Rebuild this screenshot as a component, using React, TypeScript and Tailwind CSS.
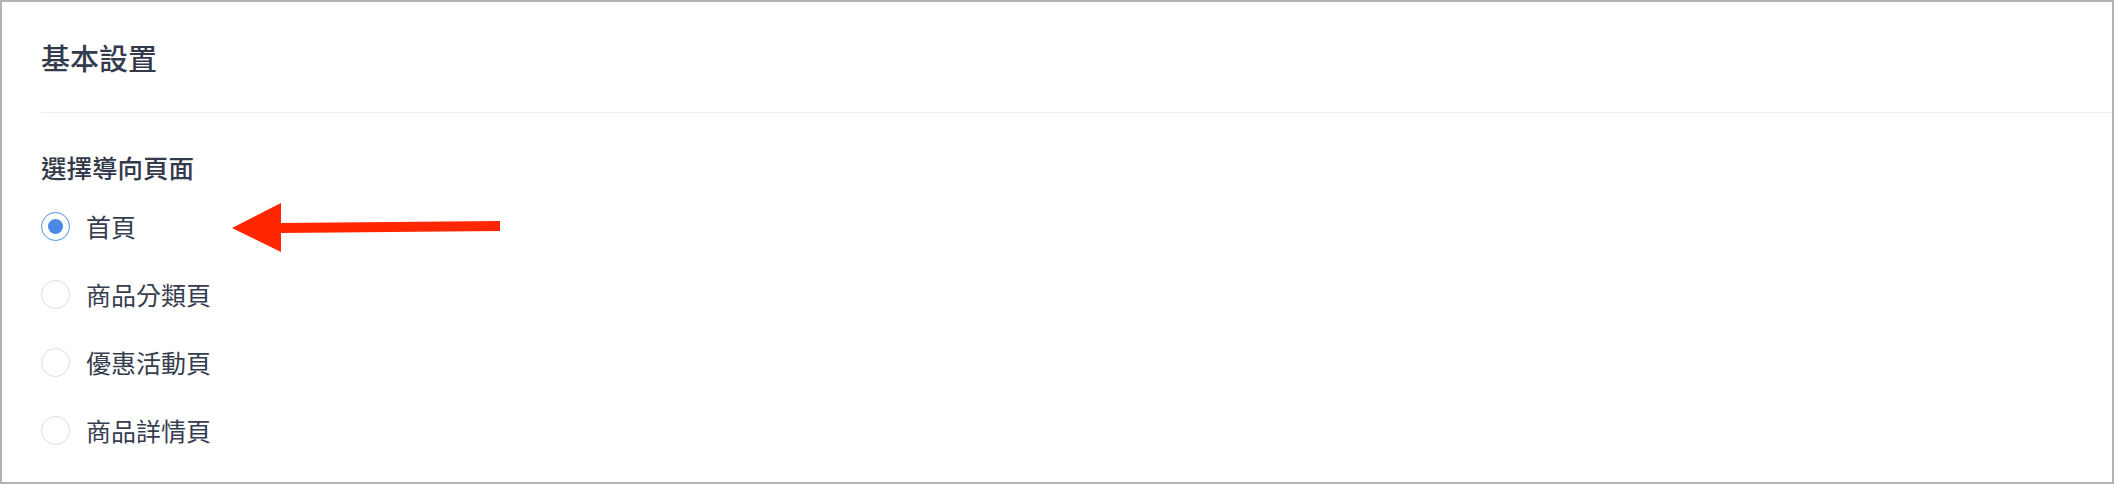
import React, { useState } from 'react';

const options = ['首頁', '商品分類頁', '優惠活動頁', '商品詳情頁'];

const font = { fontFamily: '"Noto Sans CJK TC", "Noto Sans", sans-serif' };

const Radio: React.FC<{ checked: boolean }> = ({ checked }) => (
  <span
    className={`flex h-[29px] w-[29px] shrink-0 items-center justify-center rounded-full border bg-white ${
      checked ? 'border-[#4a90e2]' : 'border-[#d6dee7]'
    }`}
  >
    {checked && <span className="h-[15px] w-[15px] rounded-full bg-[#4a8ae6]" />}
  </span>
);

const App: React.FC = () => {
  const [selected, setSelected] = useState(0);

  return (
    <div
      className="relative h-[484px] w-[2114px] overflow-hidden border-2 border-[#b3b3b3] bg-white text-[#363d4e]"
      style={font}
    >
      <div className="pl-[39px]">
        {/* card header */}
        <div className="flex h-[111px] items-center border-b border-[#ebebeb]">
          <h2 className="text-[29px] font-medium leading-none text-[#323a4b]">基本設置</h2>
        </div>

        {/* redirect target */}
        <div className="flex flex-col pt-[37px]">
          <p className="mb-[8px] text-[25.5px] font-medium leading-[34px] text-[#323a4b]">選擇導向頁面</p>
          {options.map((label, i) => (
            <label
              key={label}
              className="flex h-[68px] cursor-pointer items-center gap-[16px]"
              onClick={() => setSelected(i)}
            >
              <Radio checked={selected === i} />
              <span className="text-[25px] leading-none">{label}</span>
            </label>
          ))}
        </div>
      </div>

      {/* red annotation arrow */}
      <svg
        className="pointer-events-none absolute left-[228px] top-[199px]"
        width="272"
        height="53"
        viewBox="0 0 272 53"
      >
        <path d="M2 27 L51 2 L51 22 L270 20 L270 30 L51 32 L51 51 Z" fill="#ff2600" />
      </svg>
    </div>
  );
};

export default App;
